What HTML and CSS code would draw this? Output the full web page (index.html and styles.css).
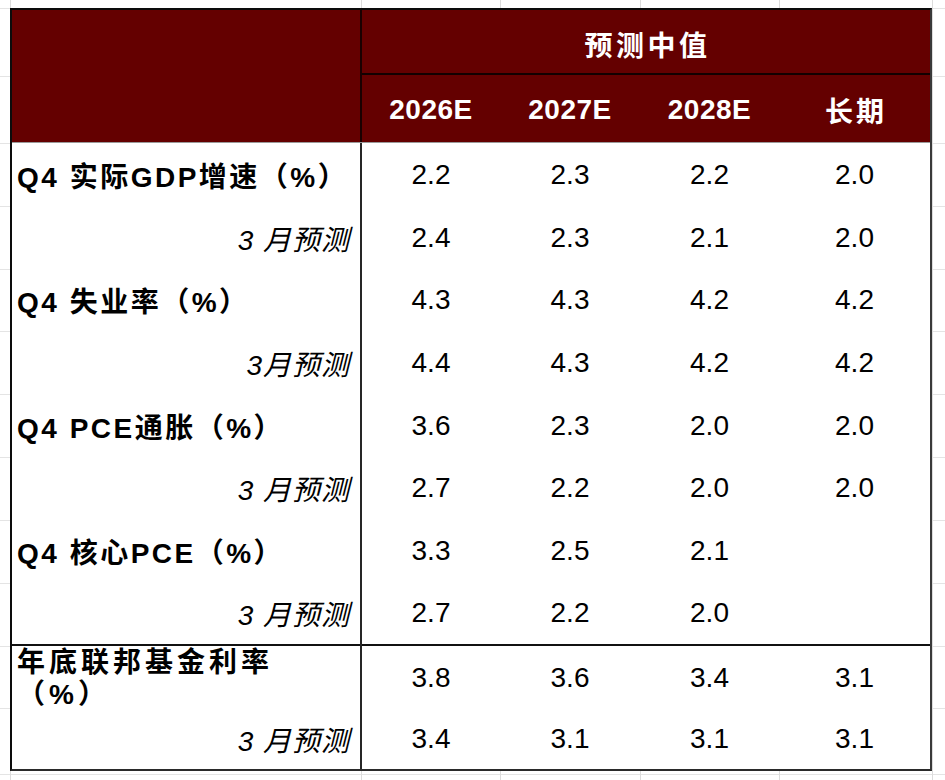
FILE: index.html
```html
<!DOCTYPE html>
<html lang="zh-CN">
<head>
<meta charset="utf-8">
<title>预测中值</title>
<link rel="stylesheet" href="styles.css">
</head>
<body>
<div class="sheet">
  <div class="tbl">
    <div class="head">
      <div class="head-blank"></div>
      <div class="head-right">
        <div class="head-title">预测中值</div>
        <div class="head-cols">
          <div class="hc">2026E</div>
          <div class="hc">2027E</div>
          <div class="hc">2028E</div>
          <div class="hc">长期</div>
        </div>
      </div>
    </div>
    <div class="body">
      <div class="row">
        <div class="lab">Q4 实际GDP增速（%）</div>
        <div class="v">2.2</div><div class="v">2.3</div><div class="v">2.2</div><div class="v">2.0</div>
      </div>
      <div class="row">
        <div class="lab sub">3 月预测</div>
        <div class="v">2.4</div><div class="v">2.3</div><div class="v">2.1</div><div class="v">2.0</div>
      </div>
      <div class="row">
        <div class="lab">Q4 失业率（%）</div>
        <div class="v">4.3</div><div class="v">4.3</div><div class="v">4.2</div><div class="v">4.2</div>
      </div>
      <div class="row">
        <div class="lab sub">3月预测</div>
        <div class="v">4.4</div><div class="v">4.3</div><div class="v">4.2</div><div class="v">4.2</div>
      </div>
      <div class="row">
        <div class="lab">Q4 PCE通胀（%）</div>
        <div class="v">3.6</div><div class="v">2.3</div><div class="v">2.0</div><div class="v">2.0</div>
      </div>
      <div class="row">
        <div class="lab sub">3 月预测</div>
        <div class="v">2.7</div><div class="v">2.2</div><div class="v">2.0</div><div class="v">2.0</div>
      </div>
      <div class="row">
        <div class="lab">Q4 核心PCE（%）</div>
        <div class="v">3.3</div><div class="v">2.5</div><div class="v">2.1</div><div class="v"></div>
      </div>
      <div class="row">
        <div class="lab sub">3 月预测</div>
        <div class="v">2.7</div><div class="v">2.2</div><div class="v">2.0</div><div class="v"></div>
      </div>
      <div class="row sep">
        <div class="lab wrap">年底联邦基金利率<br>（%）</div>
        <div class="v">3.8</div><div class="v">3.6</div><div class="v">3.4</div><div class="v">3.1</div>
      </div>
      <div class="row">
        <div class="lab sub">3 月预测</div>
        <div class="v">3.4</div><div class="v">3.1</div><div class="v">3.1</div><div class="v">3.1</div>
      </div>
    </div>
  </div>
</div>
</body>
</html>
```
FILE: styles.css
```css
html, body {
  margin: 0;
  padding: 0;
  background: #ffffff;
}

.sheet {
  width: 945px;
  height: 780px;
  box-sizing: border-box;
  padding: 8px 0 0 10px;
  background-color: #ffffff;
  background-image:
    linear-gradient(#dcdcdc, #dcdcdc),
    linear-gradient(#dcdcdc, #dcdcdc),
    linear-gradient(#dcdcdc, #dcdcdc),
    linear-gradient(#dcdcdc, #dcdcdc),
    linear-gradient(#dcdcdc, #dcdcdc),
    linear-gradient(#dcdcdc, #dcdcdc),
    linear-gradient(#e4e4e4, #e4e4e4),
    linear-gradient(#e4e4e4, #e4e4e4),
    linear-gradient(#e4e4e4, #e4e4e4),
    linear-gradient(#e4e4e4, #e4e4e4),
    linear-gradient(#e4e4e4, #e4e4e4),
    linear-gradient(#e4e4e4, #e4e4e4),
    linear-gradient(#e4e4e4, #e4e4e4),
    linear-gradient(#e4e4e4, #e4e4e4),
    linear-gradient(#e4e4e4, #e4e4e4),
    linear-gradient(#e4e4e4, #e4e4e4),
    linear-gradient(#e4e4e4, #e4e4e4),
    linear-gradient(#e4e4e4, #e4e4e4),
    linear-gradient(#e4e4e4, #e4e4e4);
  background-size:
    1px 100%, 1px 100%, 1px 100%, 1px 100%, 1px 100%, 1px 100%,
    100% 1px, 100% 1px, 100% 1px, 100% 1px, 100% 1px, 100% 1px, 100% 1px,
    100% 1px, 100% 1px, 100% 1px, 100% 1px, 100% 1px, 100% 1px;
  background-position:
    10px 0, 361px 0, 500px 0, 640px 0, 779px 0, 932px 0,
    0 8px, 0 76px, 0 143px, 0 206px, 0 269px, 0 331px, 0 394px,
    0 457px, 0 520px, 0 583px, 0 646px, 0 708px, 0 774px;
  background-repeat: no-repeat;
  font-family: "Liberation Sans", "Noto Sans CJK SC", sans-serif;
  color: #000;
}

.tbl {
  width: 922px;
  height: 763px;
  box-sizing: border-box;
  border: 2px solid #0c0c0c;
  border-right-color: #3a3a3a;
  border-bottom-color: #2a2a2a;
  background: #fff;
  display: flex;
  flex-direction: column;
}

.head {
  display: grid;
  grid-template-columns: 350px 1fr;
  height: 133px;
  flex: none;
  background: #640000;
  border-bottom: 1px solid #9a9a9a;
  box-sizing: border-box;
  color: #fff;
  font-weight: bold;
  font-size: 28px;
}

.head-blank {
  border-right: 2px solid #1a0000;
}

.head-right {
  display: flex;
  flex-direction: column;
}

.head-title {
  height: 65px;
  border-bottom: 2px solid #120000;
  display: flex;
  align-items: center;
  justify-content: center;
  padding-top: 4px;
  padding-left: 3px;
  box-sizing: border-box;
  letter-spacing: 3.5px;
}

.head-cols {
  flex: 1;
  display: grid;
  grid-template-columns: 138px 140px 139px 1fr;
}

.hc {
  display: flex;
  align-items: center;
  justify-content: center;
  padding-top: 2px;
  letter-spacing: 0.5px;
}

.hc:last-child {
  letter-spacing: 3px;
  padding-left: 3px;
}

.body {
  flex: 1;
  min-height: 0;
  display: flex;
  flex-direction: column;
}

.row {
  flex: 1 1 0;
  min-height: 0;
  display: grid;
  grid-template-columns: 350px 138px 140px 139px 1fr;
  font-size: 28px;
}

.row.sep {
  box-shadow: inset 0 2px 0 #111;
}

.lab {
  border-right: 2px solid #262626;
  display: flex;
  align-items: center;
  padding: 2px 10px 0 5px;
  font-weight: bold;
  white-space: nowrap;
  letter-spacing: 2.5px;
}

.lab.sub {
  justify-content: flex-end;
  font-weight: normal;
  font-style: italic;
  letter-spacing: 1px;
  padding-right: 10px;
}

.lab.wrap {
  align-items: flex-start;
  line-height: 32px;
  padding-top: 3px;
  letter-spacing: 4px;
}

.v {
  display: flex;
  align-items: center;
  justify-content: center;
  padding-top: 2px;
}
```
